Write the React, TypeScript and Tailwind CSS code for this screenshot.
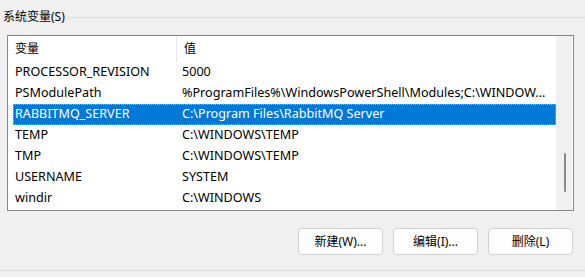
import React from "react";

const rows = [
  { name: "PROCESSOR_REVISION", value: "5000" },
  { name: "PSModulePath", value: "%ProgramFiles%\\WindowsPowerShell\\Modules;C:\\WINDOW..." },
  { name: "RABBITMQ_SERVER", value: "C:\\Program Files\\RabbitMQ Server", selected: true },
  { name: "TEMP", value: "C:\\WINDOWS\\TEMP" },
  { name: "TMP", value: "C:\\WINDOWS\\TEMP" },
  { name: "USERNAME", value: "SYSTEM" },
  { name: "windir", value: "C:\\WINDOWS" },
];

const font = {
  fontFamily: '"Noto Sans", "Noto Sans CJK SC", sans-serif',
};

const buttons = ["新建(W)...", "编辑(I)...", "删除(L)"];

export default function App() {
  return (
    <div
      className="w-[585px] h-[277px] bg-[#f0f0f0] text-[12px] text-black flex flex-col overflow-hidden"
      style={font}
    >
      {/* group label */}
      <div className="flex items-center h-[18px] mt-[8px] pl-[3px]">
        <span className="leading-[18px]">系统变量(S)</span>
        <div className="flex-1 h-px bg-[#dcdcdc] ml-[2px]" />
      </div>

      {/* list box */}
      <div className="ml-[7px] mt-[9px] w-[567px] h-[176px] border border-[#828790] bg-white flex">
        <div className="flex-1 flex flex-col pl-[5px] overflow-hidden">
          <div className="flex h-[26px] items-center shrink-0">
            <div className="w-[163px] pl-[2px]">变量</div>
            <div className="w-px h-full bg-[#e5e5e5]" />
            <div className="pl-[7px]">值</div>
          </div>
          {rows.map((row) => (
            <div
              key={row.name}
              className={
                row.selected
                  ? "flex h-[21px] items-center shrink-0 bg-[#0078d7] text-white text-[12.6px] border border-dotted border-[#f3a33a]"
                  : "flex h-[21px] items-center shrink-0 text-[12.6px] border border-transparent"
              }
            >
              <div className="w-[168px] pl-[1px] whitespace-nowrap">{row.name}</div>
              <div className="whitespace-nowrap">{row.value}</div>
            </div>
          ))}
        </div>
        {/* scrollbar */}
        <div className="w-[16px] bg-[#f0f0f0] mr-px flex flex-col items-center">
          <div className="w-[2px] h-[39px] mt-[117px] ml-[1px] bg-[#8a8a8a] rounded-full" />
        </div>
      </div>

      {/* buttons */}
      <div className="flex justify-end gap-[10px] pr-[12px] mt-[17px]">
        {buttons.map((b) => (
          <button
            key={b}
            className="w-[85px] h-[27px] bg-[#fdfdfd] border border-[#d0d0d0] rounded-[4px] text-[12px] text-black"
            style={font}
          >
            {b}
          </button>
        ))}
      </div>

      <div className="h-px bg-[#dcdcdc] mt-[15px]" />
    </div>
  );
}
